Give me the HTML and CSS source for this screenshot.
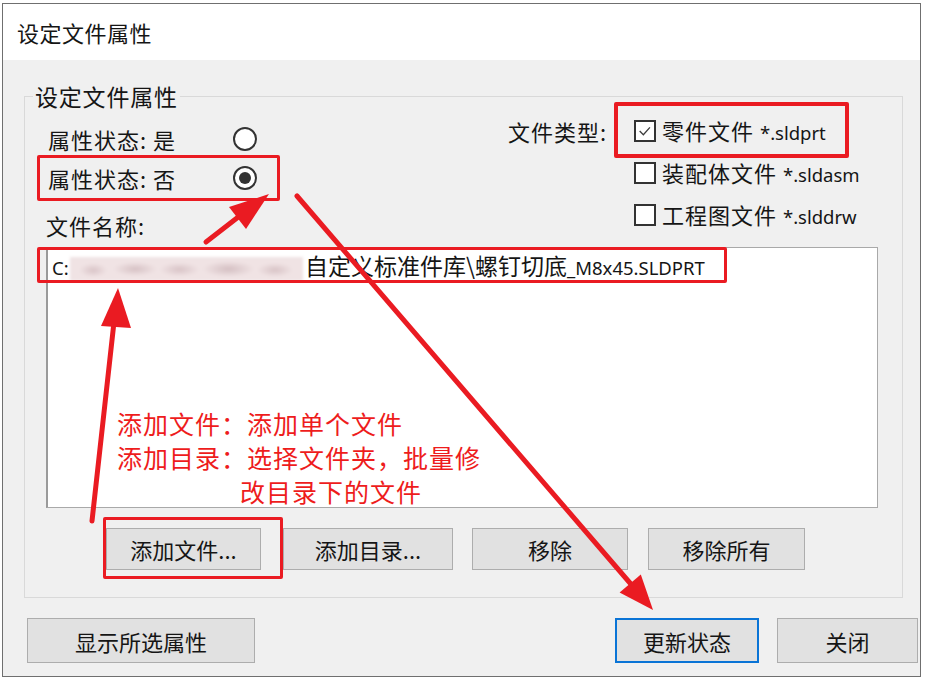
FILE: index.html
```html
<!DOCTYPE html>
<html lang="zh-CN">
<head>
<meta charset="utf-8">
<title>设定文件属性</title>
<link rel="stylesheet" href="styles.css">
</head>
<body>
<div class="window">
  <div class="titlebar">设定文件属性</div>
  <div class="content">
    <fieldset class="group">
      <legend class="legend">设定文件属性</legend>
      <div class="top">
        <div class="status-col">
          <div class="radio-row r1"><span class="lbl">属性状态: 是</span><span class="radio"></span></div>
          <div class="radio-row r2"><span class="lbl">属性状态: 否</span><span class="radio checked"><span class="dot"></span></span></div>
          <div class="name-label">文件名称:</div>
        </div>
        <div class="type-col">
          <div class="type-label">文件类型:</div>
          <div class="checks">
            <div class="check-row"><span class="box"><svg viewBox="0 0 22 22" width="20" height="20"><polyline points="4.5,11 9,15.5 17,6.5" fill="none" stroke="#3c3c3c" stroke-width="1.6"/></svg></span><span class="ctext">零件文件 <span class="ext">*.sldprt</span></span></div>
            <div class="check-row"><span class="box"></span><span class="ctext">装配体文件 <span class="ext">*.sldasm</span></span></div>
            <div class="check-row"><span class="box"></span><span class="ctext">工程图文件 <span class="ext">*.slddrw</span></span></div>
          </div>
        </div>
      </div>
      <div class="listbox">
        <div class="item"><span class="ext drive">C:</span><span class="blur" aria-hidden="true"></span>自定义标准件库\螺钉切底<span class="ext">_M8x45.SLDPRT</span></div>
      </div>
      <div class="btn-row">
        <button class="btn b-add">添加文件...</button>
        <button class="btn b-dir">添加目录...</button>
        <button class="btn b-rm">移除</button>
        <button class="btn b-rmall">移除所有</button>
      </div>
    </fieldset>
    <div class="bottom-row">
      <button class="btn b-show">显示所选属性</button>
      <div class="right-btns">
        <button class="btn primary">更新状态</button>
        <button class="btn b-close">关闭</button>
      </div>
    </div>
  </div>
</div>

<div class="annot">
  <div class="aline">添加文件：添加单个文件</div>
  <div class="aline">添加目录：选择文件夹，批量修</div>
  <div class="aline indent">改目录下的文件</div>
</div>

<div class="redbox rb-radio"></div>
<div class="redbox rb-check"></div>
<div class="redbox rb-path"></div>
<div class="redbox rb-btn"></div>

<svg class="arrows" width="925" height="680" viewBox="0 0 925 680">
  <g stroke="#ea1b22" stroke-width="5" stroke-linecap="round" fill="none">
    <line x1="297" y1="196" x2="636" y2="590"/>
    <line x1="206" y1="242" x2="246" y2="211"/>
    <line x1="92" y1="521" x2="114" y2="322"/>
  </g>
  <g fill="#ea1b22">
    <polygon points="653,610 619.6,592.6 640.8,574.4"/>
    <polygon points="269,194 229,207 246,229"/>
    <polygon points="118,288 101,326 131,328"/>
  </g>
</svg>
</body>
</html>
```

FILE: styles.css
```css
* { box-sizing: border-box; }

html, body {
  margin: 0;
  padding: 0;
  background: #ffffff;
}

body {
  position: relative;
  width: 925px;
  height: 680px;
  overflow: hidden;
  font-family: "Noto Sans CJK SC", "Noto Sans", sans-serif;
  color: #151515;
}

.window {
  margin: 3px 0 0 2px;
  width: 919px;
  height: 674px;
  border: 1px solid #6f6f6f;
  background: #f0f0f0;
}

.titlebar {
  height: 56px;
  background: #ffffff;
  padding-left: 14px;
  font-size: 22px;
  letter-spacing: 0.5px;
  line-height: 56px;
}

.content {
  padding-top: 23px;
}

.group {
  margin: 0 0 0 21px;
  padding: 0;
  width: 879px;
  border: 1px solid #d9d9d9;
  min-width: 0;
}

.legend {
  margin-left: 8px;
  padding: 0 2px;
  font-size: 23px;
  letter-spacing: 0.8px;
  line-height: 26px;
}

.top {
  display: flex;
}

.status-col {
  margin-left: 23px;
  padding-top: 11px;
  width: 212px;
  font-size: 22px;
  letter-spacing: 1px;
}

.radio-row {
  display: flex;
  align-items: center;
}
.r1 { height: 38px; }
.r2 { height: 40px; }

.lbl {
  width: 185px;
  line-height: 26px;
}

.radio {
  width: 24px;
  height: 24px;
  border: 2px solid #333333;
  border-radius: 50%;
  background: #ffffff;
  display: flex;
  align-items: center;
  justify-content: center;
}
.dot {
  width: 12px;
  height: 12px;
  border-radius: 50%;
  background: #333333;
}

.name-label {
  margin-top: 10px;
  margin-left: -2px;
  height: 34px;
  line-height: 34px;
  margin-bottom: 5px;
}

.type-col {
  margin-left: 248px;
  padding-top: 10px;
  display: flex;
  font-size: 22px;
  letter-spacing: 1px;
}

.type-label {
  width: 126px;
  line-height: 24px;
}

.checks {
  display: flex;
  flex-direction: column;
  gap: 18px;
}

.check-row {
  height: 24px;
  display: flex;
  align-items: center;
}

.box {
  width: 22px;
  height: 22px;
  border: 2px solid #333333;
  background: #ffffff;
  margin-right: 6px;
  display: flex;
  align-items: center;
  justify-content: center;
}

.ctext {
  line-height: 24px;
  white-space: nowrap;
}

.ext {
  font-family: "Noto Sans", "Noto Sans CJK SC", sans-serif;
  font-size: 18.5px;
  letter-spacing: 0;
}

.listbox {
  margin-left: 21px;
  width: 832px;
  height: 261px;
  border: 1px solid #a9a9a9;
  border-left: 2px solid #9a9a9a;
  background: #ffffff;
}

.item {
  height: 34px;
  line-height: 34px;
  padding-left: 4px;
  font-size: 23px;
  white-space: nowrap;
}

.item .ext {
  font-size: 18.5px;
}

.item .drive {
  display: inline-block;
  width: 18px;
}

.blur {
  display: inline-block;
  vertical-align: middle;
  width: 233px;
  height: 24px;
  margin-right: 2px;
  background:
    radial-gradient(ellipse 14px 7px at 10% 55%, #d9c4c7 0%, rgba(217,196,199,0) 100%),
    radial-gradient(ellipse 22px 7px at 28% 50%, #d6c1c4 0%, rgba(214,193,196,0) 100%),
    radial-gradient(ellipse 20px 7px at 47% 52%, #d8c3c6 0%, rgba(216,195,198,0) 100%),
    radial-gradient(ellipse 26px 8px at 68% 50%, #d4bfc2 0%, rgba(212,191,194,0) 100%),
    radial-gradient(ellipse 18px 7px at 88% 54%, #d8c3c6 0%, rgba(216,195,198,0) 100%),
    #f0e3e4;
  filter: blur(1.5px);
}

.btn {
  font-family: "Noto Sans CJK SC", "Noto Sans", sans-serif;
  font-size: 22px;
  color: #151515;
  background: #e1e1e1;
  border: 1px solid #adadad;
  padding: 0;
  margin: 0;
}

.btn-row {
  display: flex;
  margin-top: 20px;
  padding-left: 81px;
  padding-bottom: 27px;
}
.btn-row .btn { height: 42px; }
.b-add { width: 155px; }
.b-dir { width: 170px; margin-left: 22px; }
.b-rm { width: 156px; margin-left: 19px; }
.b-rmall { width: 157px; margin-left: 20px; }

.bottom-row {
  display: flex;
  justify-content: space-between;
  margin-top: 20px;
  padding-left: 24px;
  padding-right: 2px;
}
.bottom-row .btn { height: 45px; }
.b-show { width: 228px; }

.right-btns {
  display: flex;
  gap: 18px;
}
.primary {
  width: 144px;
  border: 2px solid #0a74d6;
}
.b-close { width: 141px; }

/* annotation overlay */
.annot {
  position: absolute;
  left: 117px;
  top: 406px;
  color: #ee1c1c;
  font-size: 25px;
  letter-spacing: 1px;
}
.aline {
  height: 34px;
  line-height: 34px;
  white-space: nowrap;
}
.indent {
  padding-left: 123px;
}

.redbox {
  position: absolute;
  border: 3px solid #ea1b22;
  border-radius: 2px;
}
.rb-radio { left: 37px; top: 155px; width: 243px; height: 46px; }
.rb-check { left: 614px; top: 102px; width: 235px; height: 56px; border-width: 4px; }
.rb-path { left: 37px; top: 247px; width: 690px; height: 36px; }
.rb-btn { left: 103px; top: 517px; width: 180px; height: 62px; }

.arrows {
  position: absolute;
  left: 0;
  top: 0;
  pointer-events: none;
}
```
